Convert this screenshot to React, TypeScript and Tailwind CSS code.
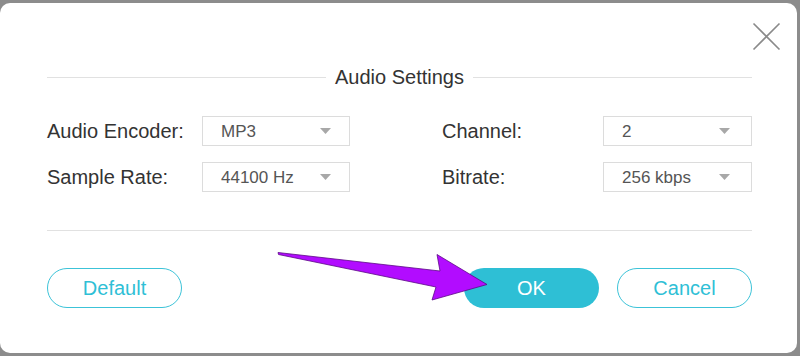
import React from "react";

function Caret() {
  return (
    <svg width="11" height="6" viewBox="0 0 11 6" className="shrink-0">
      <path d="M0 0 L11 0 L5.5 6 Z" fill="#a8a8a8" />
    </svg>
  );
}

function Select({ value, width, caretRight }: { value: string; width: string; caretRight: string }) {
  return (
    <div className={`${width} h-[30px] border border-[#dcdcdc] bg-white flex items-center pl-[18px] ${caretRight} justify-between`}>
      <span className="text-[17px] text-[#555555] leading-none">{value}</span>
      <Caret />
    </div>
  );
}

export default function App() {
  const font = { fontFamily: '"Liberation Sans", Arial, sans-serif' };
  return (
    <div className="w-[800px] h-[356px] bg-[#8c8c8c] relative overflow-hidden" style={font}>
      <div className="absolute left-0 top-[3px] w-[797px] h-[350px] bg-white rounded-[10px]">
        <button className="absolute left-[752px] top-[19px] w-[29px] h-[29px] flex items-center justify-center">
          <svg width="29" height="29" viewBox="0 0 29 29">
            <path d="M1.5 1.5 L27.5 27.5 M27.5 1.5 L1.5 27.5" stroke="#8a8a8a" strokeWidth="1.6" fill="none" />
          </svg>
        </button>
        <div className="pl-[47px] pr-[45px] pt-[62px]">
          <div className="flex items-center gap-[9px]">
            <div className="flex-1 h-px bg-[#e1e1e1]" />
            <span className="text-[20px] leading-[24px] text-[#333333]">Audio Settings</span>
            <div className="flex-1 h-px bg-[#e1e1e1]" />
          </div>
          <div className="mt-[27px] flex flex-col gap-[16px]">
            <div className="flex items-center">
              <span className="w-[155px] text-[20px] text-[#333333] leading-[24px]">Audio Encoder:</span>
              <Select value="MP3" width="w-[148px]" caretRight="pr-[18px]" />
              <span className="ml-[92px] w-[161px] text-[20px] text-[#333333] leading-[24px]">Channel:</span>
              <Select value="2" width="w-[149px]" caretRight="pr-[21px]" />
            </div>
            <div className="flex items-center">
              <span className="w-[155px] text-[20px] text-[#333333] leading-[24px]">Sample Rate:</span>
              <Select value="44100 Hz" width="w-[148px]" caretRight="pr-[18px]" />
              <span className="ml-[92px] w-[161px] text-[20px] text-[#333333] leading-[24px]">Bitrate:</span>
              <Select value="256 kbps" width="w-[149px]" caretRight="pr-[21px]" />
            </div>
          </div>
          <div className="mt-[38px] h-px bg-[#e1e1e1]" />
          <div className="mt-[37px] flex items-center">
            <button className="w-[135px] h-[40px] rounded-full border-[1.5px] border-[#3cc3d8] text-[#2fbfd6] text-[20px] bg-white">
              Default
            </button>
            <button className="ml-[282px] w-[135px] h-[40px] rounded-full bg-[#2ebfd5] text-white text-[20px]">
              OK
            </button>
            <button className="ml-[18px] w-[135px] h-[40px] rounded-full border-[1.5px] border-[#3cc3d8] text-[#2fbfd6] text-[20px] bg-white">
              Cancel
            </button>
          </div>
        </div>
      </div>
      <svg className="absolute left-0 top-0 pointer-events-none" width="800" height="356" viewBox="0 0 800 356">
        <path
          d="M278 252.5 L440 271 L437 254.5 L487 284.5 L432 300 L436 287 L278.5 254.5 Z"
          fill="#b20cff"
          stroke="#5c0a85"
          strokeWidth="0.8"
          strokeLinejoin="round"
        />
      </svg>
    </div>
  );
}
